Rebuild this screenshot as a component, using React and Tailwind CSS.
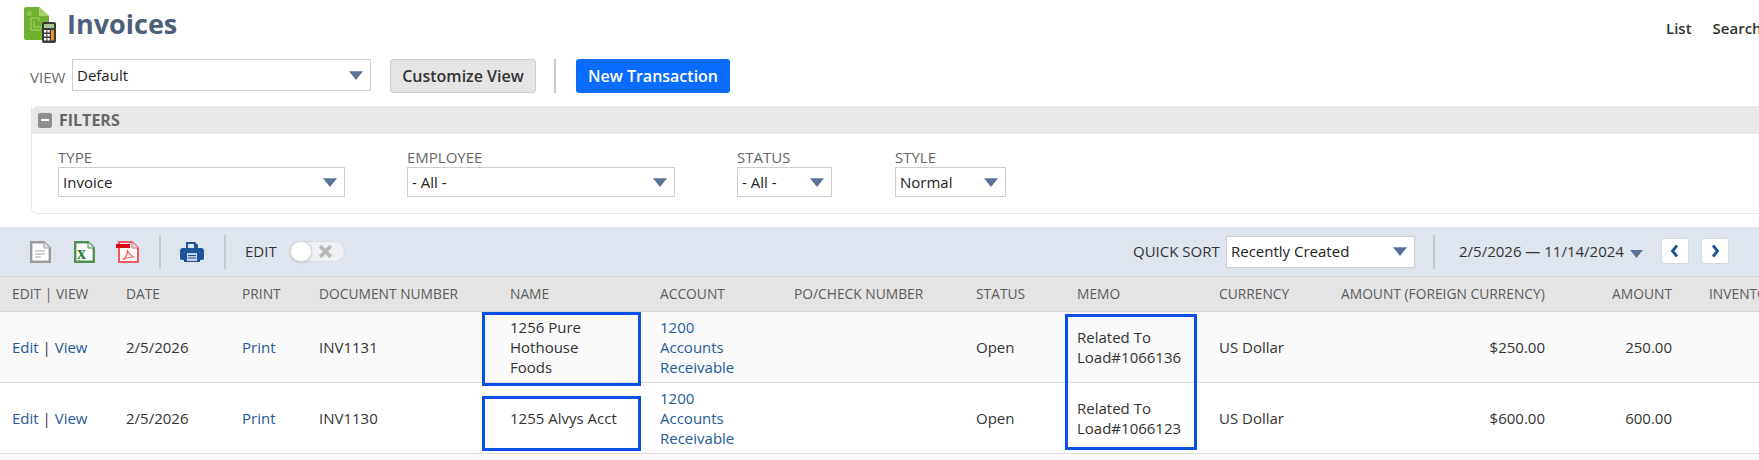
import React from 'react';

const COLS = 'grid grid-cols-[126px_116px_77px_191px_150px_134px_182px_101px_142px_122px_215px_153px_200px]';

const rows = [
  { date: '2/5/2026', doc: 'INV1131', name: ['1256 Pure', 'Hothouse', 'Foods'], memo: 'Load#1066136', foreign: '$250.00', amount: '250.00', bg: 'bg-[#fafafa]' },
  { date: '2/5/2026', doc: 'INV1130', name: ['1255 Alvys Acct'], memo: 'Load#1066123', foreign: '$600.00', amount: '600.00', bg: 'bg-white' },
];

const Caret = ({ className = 'w-[14px] h-[9px]' }) => (
  <svg viewBox="0 0 16 10" className={className}>
    <path d="M0 0h16L8 10z" fill="#5a7396" />
  </svg>
);

function Select({ value, className = '' }) {
  return (
    <div className={`flex items-center justify-between bg-white border border-[#cfcfcf] pl-1 pr-[7px] text-[15px] text-[#222] ${className}`}>
      <span>{value}</span>
      <Caret />
    </div>
  );
}

function Filter({ label, value, className }) {
  return (
    <div className={className}>
      <div className="text-[15px] leading-[18px] -mt-px mb-px text-[#666]">{label}</div>
      <Select value={value} className="h-[30px]" />
    </div>
  );
}

function Logo() {
  return (
    <svg viewBox="0 0 32 36" className="w-8 h-9">
      <path d="M0 2a2 2 0 0 1 2-2h13l10 9v24H2a2 2 0 0 1-2-2z" fill="#6fb02c" />
      <path d="M15 0l10 9H15z" fill="#a2d06c" />
      <path d="M4 5h3v3H4zM7 11h8v3M7 11v12h10M10 14v6h8" fill="none" stroke="#a9d47a" strokeWidth="1" />
      <rect x="18" y="15" width="14" height="21" rx="2" fill="#3a3a3a" />
      <rect x="20" y="17" width="10" height="4" fill="#a9c98c" />
      <path d="M20 23h2.4v2.4H20zM23.4 23h2.4v2.4h-2.4zM20 27h2.4v2.4H20zM23.4 27h2.4v2.4h-2.4zM20 31h2.4v2.4H20zM23.4 31h2.4v2.4h-2.4z" fill="#fff" />
      <rect x="27" y="23" width="3" height="10.4" fill="#e8902c" />
    </svg>
  );
}

function DocIcon({ stroke, children }) {
  return (
    <svg viewBox="0 0 21 22" className="w-[21px] h-[22px]">
      <path d="M1.2 1.2h12.8l5.8 5.8v13.8H1.2z" fill="#fff" stroke={stroke} strokeWidth="2.4" />
      <path d="M14 1v6h6" fill="#dfe5ef" stroke={stroke} strokeWidth="1" />
      {children}
    </svg>
  );
}

function Divider({ className = '' }) {
  return <div className={`w-0.5 h-[34px] bg-[#c4c8ce] ${className}`} />;
}

function PageButton({ d }) {
  return (
    <div className="w-7 h-[26px] rounded-[3px] bg-white border border-[#d5d9e0] flex items-center justify-center">
      <svg viewBox="0 0 10 14" className="w-2.5 h-3.5">
        <path d={d} fill="none" stroke="#1f5397" strokeWidth="2.8" />
      </svg>
    </div>
  );
}

export default function App() {
  return (
    <div className="relative w-[1759px] h-[460px] overflow-hidden bg-white font-['Open_Sans',sans-serif] text-[#333]">
      {/* Title */}
      <div className="h-[52px] flex items-start justify-between">
        <div className="flex items-start pl-6 pt-[7px]">
          <Logo />
          <span className="ml-[11px] text-[27px] leading-[36px] font-bold text-[#4d5f79] -mt-[1px]">Invoices</span>
        </div>
        <div className="flex gap-[21px] pt-[18px] text-[15px] leading-[20px] font-semibold text-[#333] w-[93px] whitespace-nowrap">
          <span>List</span>
          <span>Search</span>
        </div>
      </div>

      {/* View row */}
      <div className="h-[54px] flex items-start pl-[30px] pt-[7px]">
        <span className="text-[15px] leading-[20px] text-[#6a6a6a] mt-[8px] w-[42px]">VIEW</span>
        <Select value="Default" className="w-[299px] h-8" />
        <button className="ml-[19px] h-[34px] w-[146px] rounded-[3px] bg-[#e5e5e5] border border-[#ccc] text-[16px] font-semibold text-[#333]">Customize View</button>
        <div className="w-0.5 h-[34px] bg-[#ccc] ml-[18px]" />
        <button className="ml-5 h-[34px] w-[154px] rounded-[3px] bg-[#0a6cff] text-[16px] font-semibold text-white">New Transaction</button>
      </div>

      {/* Filters */}
      <div className="ml-[31px] h-[108px] rounded-bl-[6px] border-l border-b border-[#e8e8e8]">
        <div className="h-[28px] bg-[#e8e8e8] rounded-tl-[6px] flex items-center pl-[6px] gap-[7px]">
          <span className="w-[14px] h-[15px] rounded-[2px] bg-[#8f8f8f] flex items-center justify-center">
            <span className="w-2 h-0.5 bg-white" />
          </span>
          <span className="text-[16px] font-bold text-[#666]">FILTERS</span>
        </div>
        <div className="flex pt-[15px] pl-[26px]">
          <Filter label="TYPE" value="Invoice" className="w-[287px] mr-[62px]" />
          <Filter label="EMPLOYEE" value="- All -" className="w-[268px] mr-[62px]" />
          <Filter label="STATUS" value="- All -" className="w-[95px] mr-[63px]" />
          <Filter label="STYLE" value="Normal" className="w-[111px]" />
        </div>
      </div>

      {/* Toolbar */}
      <div className="mt-[13px] h-[49px] bg-[#dfe5ef] flex items-center pl-[30px] whitespace-nowrap">
        <DocIcon stroke="#9b9b9b">
          <path d="M5 10h10M5 13h10M5 16h6" stroke="#c4c4c4" strokeWidth="1.5" />
        </DocIcon>
        <div className="ml-[23px]">
          <DocIcon stroke="#4f8f4f">
            <text x="3" y="18" fontSize="18" fontWeight="700" fontFamily="Liberation Serif" fill="#2f7d32">x</text>
          </DocIcon>
        </div>
        <div className="ml-[21px]">
          <svg viewBox="0 0 23 22" className="w-[23px] h-[22px]">
            <path d="M3 1h13l6 6v14H3z" fill="#fff" stroke="#f45a5a" strokeWidth="2" />
            <path d="M16 1v6h6" fill="#dfe5ef" stroke="#f45a5a" strokeWidth="1" />
            <path d="M7 19c3-3 5-7 4-10 2 4 4 6 7 7-3 0-7 0-11 3z" fill="none" stroke="#f45a5a" strokeWidth="1.2" />
            <rect x="0" y="3" width="14" height="4" fill="#d80c18" />
          </svg>
        </div>
        <Divider className="ml-[20px]" />
        <div className="ml-[19px]">
          <svg viewBox="0 0 24 22" className="w-6 h-[22px]">
            <path d="M6 1h9l3 3v4H6z" fill="#1f5397" />
            <rect x="8" y="3" width="6" height="4" fill="#dfe5ef" />
            <path d="M3 7h18a3 3 0 0 1 3 3v7a2 2 0 0 1-2 2h-2v2H4v-2H2a2 2 0 0 1-2-2v-7a3 3 0 0 1 3-3z" fill="#1f5397" />
            <rect x="7" y="12" width="10" height="8" fill="#c4d1e5" />
            <path d="M8 14.5h8M8 17h8" stroke="#1f5397" strokeWidth="1" />
          </svg>
        </div>
        <Divider className="ml-5" />
        <span className="ml-[19px] w-[31px] text-[15px] text-[#333]">EDIT</span>
        <div className="ml-[13px] relative w-[56px] h-[21px] rounded-full bg-[#eef0f3] border border-[#d8dbe0] flex items-center justify-end pr-[11px]">
          <span className="absolute left-0 top-[-1px] w-[22px] h-[21px] rounded-full bg-white border border-[#d0d3d8] shadow-sm" />
          <svg viewBox="0 0 14 14" className="w-[15px] h-[15px]">
            <path d="M2 2l10 10M12 2L2 12" stroke="#b8b8b8" strokeWidth="3.4" />
          </svg>
        </div>
        <span className="ml-[788px] w-[86px] text-[15px] text-[#333]">QUICK SORT</span>
        <Select value="Recently Created" className="ml-[7px] w-[189px] h-8" />
        <Divider className="ml-[18px]" />
        <span className="ml-6 w-[166px] text-[15px] text-[#333]">2/5/2026 — 11/14/2024</span>
        <Caret className="ml-[5px] mt-1 w-[13px] h-2" />
        <div className="ml-[18px] flex gap-3 -mt-[1px]">
          <PageButton d="M7 1.5L2.5 7 7 12.5" />
          <PageButton d="M3 1.5L7.5 7 3 12.5" />
        </div>
      </div>

      {/* Table */}
      <div className={`${COLS} h-[36px] items-center bg-[#e4e4e4] border-t border-b border-[#d4d4d4] text-[13.8px] text-[#5c5c5c] whitespace-nowrap`}>
        <span className="pl-3">EDIT | VIEW</span>
        <span>DATE</span>
        <span>PRINT</span>
        <span>DOCUMENT NUMBER</span>
        <span>NAME</span>
        <span>ACCOUNT</span>
        <span>PO/CHECK NUMBER</span>
        <span>STATUS</span>
        <span>MEMO</span>
        <span>CURRENCY</span>
        <span>AMOUNT (FOREIGN CURRENCY)</span>
        <span className="text-right pr-[37px]">AMOUNT</span>
        <span>INVENTORY</span>
      </div>
      {rows.map(r => (
        <div key={r.doc} className={`${COLS} h-[71px] items-center ${r.bg} border-b border-[#dcdcdc] text-[15px] leading-[20px] text-[#333]`}>
          <span className="pl-3 text-[#255a99]">Edit <span className="text-[#333]">|</span> View</span>
          <span>{r.date}</span>
          <span className="text-[#255a99]">Print</span>
          <span>{r.doc}</span>
          <div>{r.name.map(n => <div key={n}>{n}</div>)}</div>
          <div className="text-[#255a99]">
            <div>1200</div>
            <div>Accounts</div>
            <div>Receivable</div>
          </div>
          <span />
          <span>Open</span>
          <div>
            <div>Related To</div>
            <div>{r.memo}</div>
          </div>
          <span>US Dollar</span>
          <span className="text-right pr-[11px]">{r.foreign}</span>
          <span className="text-right pr-[37px]">{r.amount}</span>
          <span />
        </div>
      ))}
      <div className="h-[6px] bg-[#fafafa]" />

      {/* Highlight boxes drawn over the table */}
      <div className="absolute left-[482px] top-[312px] w-[159px] h-[74px] border-[3px] border-[#0a50e6]" />
      <div className="absolute left-[482px] top-[396px] w-[159px] h-[55px] border-[3px] border-[#0a50e6]" />
      <div className="absolute left-[1065px] top-[314px] w-[132px] h-[136px] border-[3px] border-[#0a50e6]" />
    </div>
  );
}
